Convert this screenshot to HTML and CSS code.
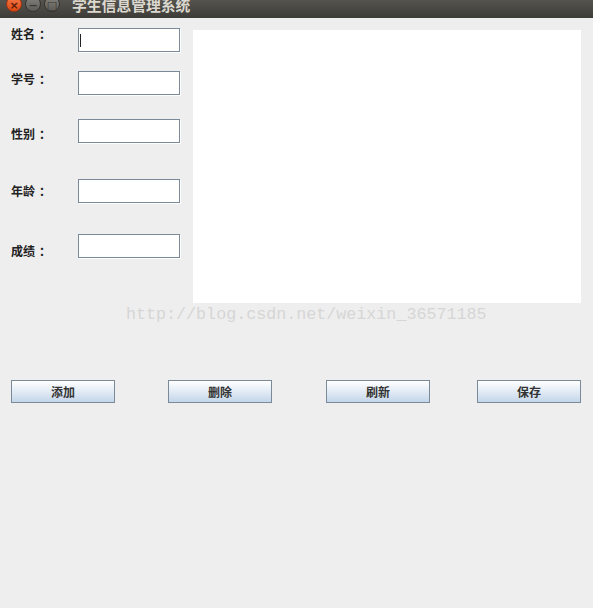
FILE: index.html
```html
<!DOCTYPE html>
<html lang="zh-CN">
<head>
    <meta charset="UTF-8">
    <meta name="viewport" content="width=device-width, initial-scale=1.0">
    <title>学生信息管理系统</title>
    <link rel="stylesheet" href="styles.css">
</head>
<body>
    <div class="titlebar">
        <div class="win-buttons">
            <span class="win-btn close">&times;</span>
            <span class="win-btn minimize">&minus;</span>
            <span class="win-btn maximize">&#9633;</span>
        </div>
        <div class="title">学生信息管理系统</div>
    </div>

    <div class="window-body">
        <div class="top-area">
            <div class="form">
                <div class="labels">
                    <span class="label">姓名<span class="colon">：</span></span>
                    <span class="label">学号<span class="colon">：</span></span>
                    <span class="label">性别<span class="colon">：</span></span>
                    <span class="label">年龄<span class="colon">：</span></span>
                    <span class="label">成绩<span class="colon">：</span></span>
                </div>
                <div class="fields">
                    <div class="field-wrap">
                        <input type="text" class="field" autofocus>
                        <span class="caret"></span>
                    </div>
                    <input type="text" class="field">
                    <input type="text" class="field">
                    <input type="text" class="field">
                    <input type="text" class="field">
                </div>
            </div>
            <textarea class="output"></textarea>
            <div class="watermark">http://blog.csdn.net/weixin_36571185</div>
        </div>

        <div class="actions">
            <button class="action">添加</button>
            <button class="action">删除</button>
            <button class="action">刷新</button>
            <button class="action">保存</button>
        </div>
    </div>
</body>
</html>
```

FILE: styles.css
```css
body {
    margin: 0;
    background-color: #eeeeee;
    font-family: "Noto Sans CJK SC", "Noto Sans", sans-serif;
    height: 608px;
    overflow: hidden;
}

/* window title bar (top is cut off in the shot) */
.titlebar {
    height: 18px;
    display: flex;
    align-items: flex-start;
    background: linear-gradient(#55534d, #3d3c38);
    overflow: hidden;
}

.win-buttons {
    display: flex;
    gap: 3px;
    margin: -4px 0 0 6px;
}

.win-btn {
    width: 16px;
    height: 16px;
    border-radius: 50%;
    display: flex;
    align-items: center;
    justify-content: center;
    font-family: "DejaVu Sans", sans-serif;
    font-size: 11px;
    font-weight: bold;
    line-height: 1;
    color: #3b3a36;
    box-sizing: border-box;
    border: 1px solid #34332f;
    padding-top: 2px;
}

.win-btn.close {
    background: linear-gradient(#f47a48, #dd4814);
    border-color: #9c3410;
    color: #5a1d08;
}

.win-btn.minimize,
.win-btn.maximize {
    background: linear-gradient(#84827c, #5d5b56);
}

.title {
    margin: -5px 0 0 12px;
    font-size: 14.8px;
    font-weight: bold;
    line-height: 20px;
    color: #dcd8cf;
}

.window-body {
    padding: 0 12px 0 11px;
}

.top-area {
    display: flex;
    gap: 13px;
    position: relative;
    height: 285px;
}

.form {
    display: flex;
    width: 169px;
}

.labels {
    display: flex;
    flex-direction: column;
    width: 67px;
}

.label {
    font-size: 12px;
    font-weight: bold;
    line-height: 14px;
    color: #222;
}

/* full-width colon sits centred in its cell in the original */
.colon {
    padding-left: 4px;
}

.label:nth-child(1) { margin-top: 9px; }
.label:nth-child(2) { margin-top: 31px; }
.label:nth-child(3) { margin-top: 41px; }
.label:nth-child(4) { margin-top: 43px; }
.label:nth-child(5) { margin-top: 46px; }

.fields {
    display: flex;
    flex-direction: column;
}

.field-wrap {
    position: relative;
    display: flex;
}

.caret {
    position: absolute;
    left: 2px;
    top: 6px;
    width: 1px;
    height: 13px;
    background-color: #222;
}

.field {
    width: 102px;
    height: 24px;
    box-sizing: border-box;
    margin: 0;
    padding: 2px;
    border: 1px solid #7a8a99;
    background-color: #fff;
    box-shadow: 1px 1px 0 #fff;
    outline: none;
    caret-color: transparent;
    font-size: 12px;
}

.field-wrap { margin-top: 10px; }
.fields > .field:nth-child(2) { margin-top: 19px; }
.fields > .field:nth-child(3) { margin-top: 24px; }
.fields > .field:nth-child(4) { margin-top: 36px; }
.fields > .field:nth-child(5) { margin-top: 31px; }

.output {
    width: 388px;
    height: 273px;
    margin: 12px 0 0 0;
    padding: 0;
    box-sizing: border-box;
    border: none;
    background-color: #fff;
    resize: none;
    outline: none;
}

/* blog watermark burned into the screenshot */
.watermark {
    position: absolute;
    left: 115px;
    top: 287px;
    font-family: "Liberation Mono", monospace;
    font-size: 16.7px;
    line-height: 20px;
    color: #d6d6d6;
    white-space: nowrap;
    pointer-events: none;
}

.actions {
    display: flex;
    margin-top: 77px;
}

.action {
    width: 104px;
    height: 23px;
    margin: 0;
    padding: 0;
    border: 1px solid #7a8a99;
    background: linear-gradient(#ffffff 0%, #eef3f9 30%, #c4d6ea 100%);
    font-family: "Noto Sans CJK SC", sans-serif;
    font-size: 12px;
    font-weight: bold;
    color: #333;
    line-height: 1;
}

.action:nth-child(2) { margin-left: 53px; }
.action:nth-child(3) { margin-left: 54px; }
.action:nth-child(4) { margin-left: 47px; }
```
